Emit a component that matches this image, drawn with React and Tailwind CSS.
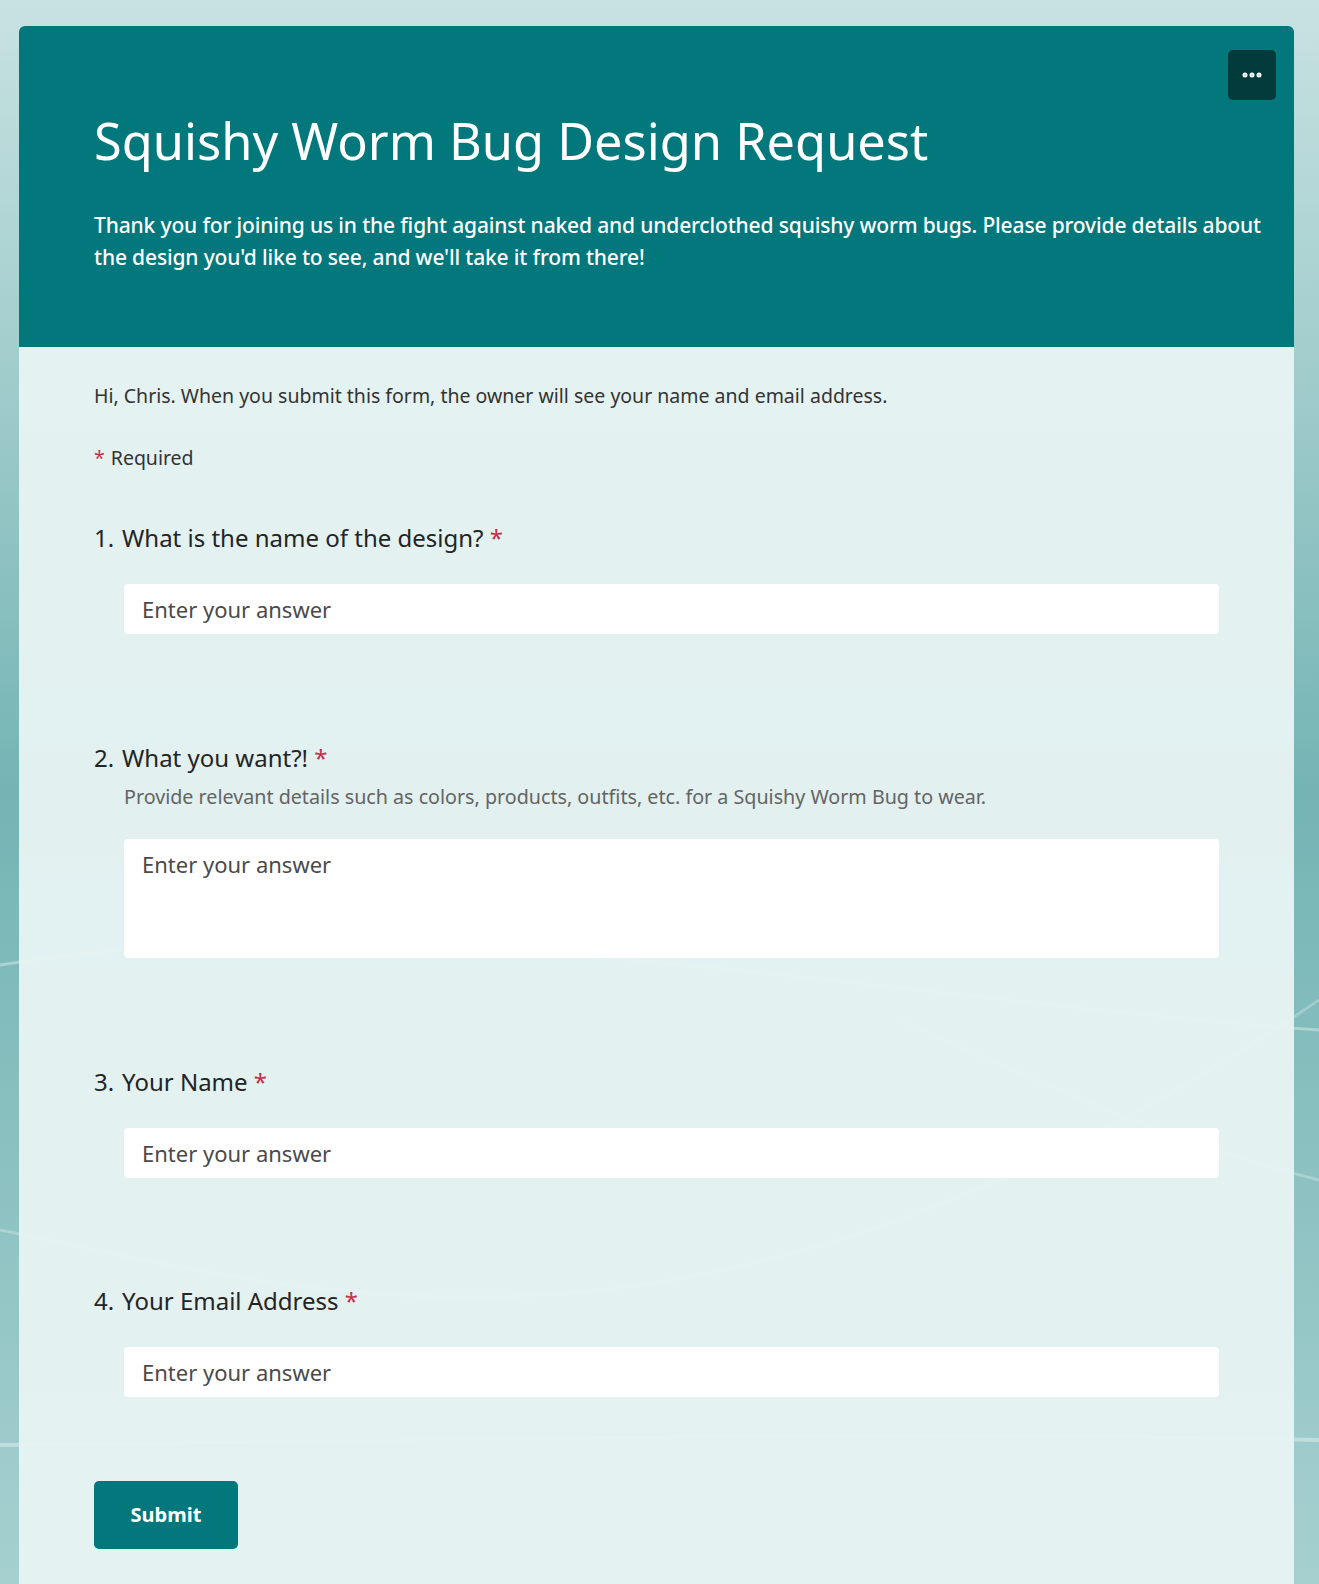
import { MoreHorizontal } from "lucide-react";

const font = { fontFamily: '"Noto Sans", "Open Sans", Arial, sans-serif' };

function Question({ num, label, hint, tall, className }) {
  return (
    <div className={className}>
      <div className="flex text-[24px] leading-[32px] text-[#242424]">
        <span className="w-[28px] shrink-0">{num}.</span>
        <span>
          {label} <span className="text-[#c4314b]">*</span>
        </span>
      </div>
      {hint && (
        <div className="mt-[11px] pl-[30px] text-[19.7px] leading-[24px] text-[#646464]">{hint}</div>
      )}
      <div className="pl-[30px] mt-[30px]">
        {tall ? (
          <textarea
            placeholder="Enter your answer"
            className="block w-full h-[119px] resize-none rounded-[4px] bg-white px-[18px] py-[10px] text-[22px] leading-[30px] text-[#333] placeholder:text-[#4a4a4a] outline-none"
          />
        ) : (
          <input
            placeholder="Enter your answer"
            className="block w-full h-[50px] rounded-[4px] bg-white px-[18px] text-[22px] text-[#333] placeholder:text-[#4a4a4a] outline-none"
          />
        )}
      </div>
    </div>
  );
}

export default function App() {
  return (
    <div
      className="relative min-h-screen overflow-hidden bg-gradient-to-b from-[#c8e2e2] via-[#74b4b4] to-[#a6d0d0] pl-[19px] pr-[25px] pt-[26px]"
      style={font}
    >
      {/* background waves */}
      <svg className="absolute inset-0 w-full h-full" viewBox="0 0 1319 1584" preserveAspectRatio="none">
        <path d="M0 965 C 400 900, 900 1000, 1319 1030" stroke="white" strokeOpacity="0.35" strokeWidth="3" fill="none" />
        <path d="M0 1230 C 300 1290, 700 1420, 1319 1000" stroke="white" strokeOpacity="0.25" strokeWidth="3" fill="none" />
        <path d="M0 1445 C 500 1440, 900 1430, 1319 1440" stroke="white" strokeOpacity="0.35" strokeWidth="4" fill="none" />
        <path d="M1319 1180 C 1200 1150, 1100 1110, 900 1020" stroke="white" strokeOpacity="0.25" strokeWidth="3" fill="none" />
      </svg>

      <div className="relative rounded-t-[6px] overflow-hidden">
        <div className="relative h-[321px] bg-[#03787c] pl-[75px] pr-[24px] pt-[82px] text-white">
          <button className="absolute right-[18px] top-[24px] flex h-[50px] w-[48px] items-center justify-center rounded-[5px] bg-[#033a3c]">
            <MoreHorizontal className="h-6 w-6" strokeWidth={3} />
          </button>
          <h1 className="text-[50.5px] leading-[66px] font-normal">Squishy Worm Bug Design Request</h1>
          <p className="mt-[35px] text-[21px] leading-[32px] font-medium tracking-[-0.15px]">
            Thank you for joining us in the fight against naked and underclothed squishy worm bugs. Please provide details about the design you'd like to see, and we'll take it from there!
          </p>
        </div>

        <div className="h-[1237px] bg-[#e8f3f3]/95 pl-[75px] pr-[75px] pt-[37px]">
          <p className="text-[19.5px] leading-[24px] text-[#333]">
            Hi, Chris. When you submit this form, the owner will see your name and email address.
          </p>
          <p className="mt-[38px] text-[19.5px] leading-[24px] text-[#333]">
            <span className="text-[#c4314b] mr-[6px]">*</span>Required
          </p>

          <Question className="mt-[52px]" num="1" label="What is the name of the design?" />
          <Question
            className="mt-[108px]"
            num="2"
            label="What you want?!"
            hint="Provide relevant details such as colors, products, outfits, etc. for a Squishy Worm Bug to wear."
            tall
          />
          <Question className="mt-[108px]" num="3" label="Your Name" />
          <Question className="mt-[107px]" num="4" label="Your Email Address" />

          <button className="mt-[84px] h-[68px] w-[144px] rounded-[5px] bg-[#03787c] text-[20px] font-bold text-white">
            Submit
          </button>
        </div>
      </div>
    </div>
  );
}
